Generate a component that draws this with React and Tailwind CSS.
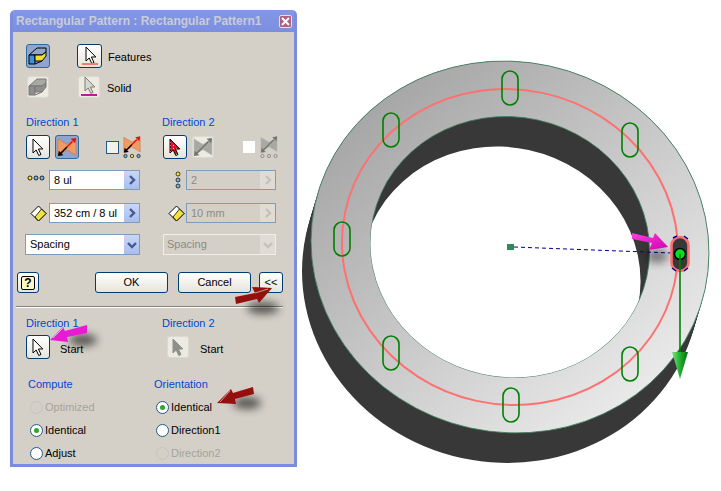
import React from 'react'

const font = { fontFamily: '"Liberation Sans", Tahoma, sans-serif' }

function Cursor({ x = 0, y = 0, fill = '#fff', stroke = '#000' }) {
  return (
    <path
      d="M0 0V14L3.2 11L5.8 16.5L8 15.5L5.4 10H9.8Z"
      transform={`translate(${x} ${y})`}
      fill={fill}
      stroke={stroke}
      strokeWidth="1"
    />
  )
}

function Btn({ w = 24, h = 24, active, off, children, className = '' }) {
  let look = 'border-[#003c74] bg-linear-to-b from-white to-[#e6e4da]'
  if (active) look = 'border-[#2f6a9c] bg-[#8ea6cd]'
  if (off) look = 'border-[#dcd9cf] bg-[#ecebe2]'
  return (
    <div
      className={`flex items-center justify-center shrink-0 rounded-[3px] border ${look} ${className}`}
      style={{ width: w, height: h }}
    >
      {children}
    </div>
  )
}

function ArrowBtn({ off, down }) {
  const c = off ? '#c4c2b8' : '#45598f'
  return (
    <div className={`flex items-center justify-center w-[15px] self-stretch ${off ? 'bg-[#dedcd4]' : 'bg-linear-to-b from-[#c9d6f5] to-[#a9bdf0]'}`}>
      <svg width="10" height="10" viewBox="0 0 10 10">
        <path d={down ? 'M1 3L5 7L9 3' : 'M3 1L7 5L3 9'} fill="none" stroke={c} strokeWidth="2.4" />
      </svg>
    </div>
  )
}

function Field({ value, w, off, down }) {
  return (
    <div
      className={`flex items-center h-full border pl-[4px] text-[11px] ${off ? 'border-[#7f9db9] text-[#8b8b85]' : 'border-[#7f9db9] bg-white text-black'}`}
      style={{ width: w }}
    >
      <span className="flex-1 whitespace-nowrap">{value}</span>
      <ArrowBtn off={off} down={down} />
    </div>
  )
}

function Bowtie({ off }) {
  const fill = off ? '#a9a9a3' : '#f09a64'
  const line = off ? '#74746f' : '#000'
  const tip = off ? '#74746f' : '#e01010'
  return (
    <g>
      <path d="M1 2L11 8L21 2V20L11 14L1 20Z" fill={fill} stroke={off ? '#c8c8c2' : '#c8703c'} strokeWidth=".6" />
      <path d="M4 18L11 11" stroke={line} strokeWidth="1.6" />
      <path d="M1 21L7 20L2 15Z" fill={line} />
      <path d="M11 11L17 5" stroke={tip} strokeWidth="1.6" />
      <path d="M21 1L15 2L20 7Z" fill={tip} />
    </g>
  )
}

function Block({ off }) {
  const stroke = off ? '#77777a' : '#000'
  return (
    <svg width="20" height="20" viewBox="0 0 20 20">
      <path d="M1 9L9 2H18L18 6L14 9H1Z" fill={off ? '#a8a8a4' : '#8fa6c8'} stroke={stroke} />
      <path d="M1 9H7V18H1Z" fill={off ? '#8f8f8b' : '#3f8fe0'} stroke={stroke} />
      <path d="M7 9H14L18 6V10L14 15H7Z" fill={off ? '#8f8f8b' : '#f4dc30'} stroke={stroke} />
      <path d="M7 18L14 15" stroke={stroke} />
    </svg>
  )
}

function Diamond({ className = '' }) {
  return (
    <svg width="17" height="17" viewBox="0 0 17 17" className={className}>
      <path d="M8.5 1L16 8.5L8.5 16L1 8.5Z" fill="#fff" stroke="#000" />
      <path d="M11.5 4L16 8.5L8.5 16L5 12Z" fill="#f4e23c" stroke="#000" strokeWidth=".8" />
    </svg>
  )
}

function Radio({ label, checked, off }) {
  return (
    <div className="flex items-center h-[23px] gap-[2px]">
      <div className={`flex items-center justify-center w-[13px] h-[13px] rounded-full border ${off ? 'border-[#c6c3ba]' : 'border-[#1f5a8c] bg-white'}`}>
        {checked && <div className="w-[5px] h-[5px] rounded-full bg-[#2fa52f]" />}
      </div>
      <span className={`text-[11px] ${off ? 'text-[#a5a39c]' : 'text-black'}`}>{label}</span>
    </div>
  )
}

function Label({ children }) {
  return <div className="h-[14px] leading-[14px] text-[11px] text-[#0046d5]">{children}</div>
}

function Dialog() {
  return (
    <div
      className="w-[287px] h-[457px] ml-[10px] mt-[10px] shrink-0 flex flex-col overflow-hidden rounded-t-[5px] border-[3px] border-t-0 border-[#7b8be0] bg-[#d4d0c8]"
      style={font}
    >
      <div className="flex items-center justify-between shrink-0 h-[22px] -mx-[3px] pl-[6px] pr-[5px] bg-linear-to-b from-[#8497e6] to-[#7b8ee0]">
        <span className="text-[12px] font-bold text-[#c9ccd6] whitespace-nowrap">Rectangular Pattern : Rectangular Pattern1</span>
        <div className="flex items-center justify-center w-[13px] h-[13px] rounded-[2px] border border-[#e6dcea] bg-[#b25f7c]">
          <svg width="9" height="9" viewBox="0 0 9 9">
            <path d="M1 1L8 8M8 1L1 8" stroke="#fff" strokeWidth="2" />
          </svg>
        </div>
      </div>

      <div className="flex items-center h-6 mt-3 ml-[13px] text-[11px]">
        <Btn active><Block /></Btn>
        <Btn w={25} className="ml-[27px]">
          <svg width="20" height="21" viewBox="0 0 20 21">
            <Cursor x={6} y={1} />
            <path d="M2 18H18" stroke="#f47a7a" strokeWidth="2" />
          </svg>
        </Btn>
        <span className="ml-[6px] mt-[3px]">Features</span>
      </div>

      <div className="flex items-center h-[22px] mt-2 ml-[14px] text-[11px]">
        <Btn w={22} h={22} off><Block off /></Btn>
        <Btn w={22} h={22} off className="ml-[29px]">
          <svg width="18" height="20" viewBox="0 0 18 20">
            <Cursor x={5} y={0} fill="#d8d8d2" stroke="#7d7d78" />
            <path d="M1 18H17" stroke="#c8149a" strokeWidth="2" />
          </svg>
        </Btn>
        <span className="ml-[7px] mt-[3px]">Solid</span>
      </div>

      <div className="grid grid-cols-[137px_1fr] mt-[17px] ml-3">
        <div className="flex flex-col text-[11px]">
          <div className="ml-px"><Label>Direction 1</Label></div>
          <div className="flex items-center h-6 mt-[6px] ml-px">
            <Btn>
              <svg width="14" height="18" viewBox="0 0 14 18"><Cursor x={2} y={1} /></svg>
            </Btn>
            <Btn active className="ml-[5px]">
              <svg width="20" height="20" viewBox="0 0 22 22"><Bowtie /></svg>
            </Btn>
            <div className="w-[13px] h-[13px] ml-[27px] border border-[#1f5a8c] bg-[#f2f1ea]" />
            <svg width="18" height="24" viewBox="0 0 22 28" className="ml-[4px]">
              <Bowtie />
              <circle cx="3" cy="25" r="2" fill="#7fb3d8" stroke="#000" strokeWidth=".8" />
              <circle cx="11" cy="25" r="2" fill="#f4e23c" stroke="#000" strokeWidth=".8" />
              <circle cx="19" cy="25" r="2" fill="#7fb3d8" stroke="#000" strokeWidth=".8" />
            </svg>
          </div>
          <div className="flex items-center h-5 mt-[11px]">
            <div className="w-[24px] pl-[2px]">
              <svg width="18" height="6" viewBox="0 0 18 6" className="block -mt-[5px]">
                <circle cx="3" cy="3" r="2" fill="#f4e23c" stroke="#000" strokeWidth=".8" />
                <circle cx="9" cy="3" r="2" fill="#7fb3d8" stroke="#000" strokeWidth=".8" />
                <circle cx="15" cy="3" r="2" fill="#7fb3d8" stroke="#000" strokeWidth=".8" />
              </svg>
            </div>
            <Field value="8 ul" w={91} />
          </div>
          <div className="flex items-center h-5 mt-[13px]">
            <div className="w-[24px] flex justify-end pr-[2px]"><Diamond /></div>
            <Field value="352 cm / 8 ul" w={91} />
          </div>
          <div className="h-[21px] mt-[11px]">
            <Field value="Spacing" w={115} down />
          </div>
        </div>

        <div className="flex flex-col text-[11px]">
          <Label>Direction 2</Label>
          <div className="flex items-center h-6 mt-[6px] ml-px">
            <Btn>
              <svg width="14" height="18" viewBox="0 0 14 18">
                <defs>
                  <pattern id="check" width="3" height="3" patternUnits="userSpaceOnUse">
                    <rect width="3" height="3" fill="#e8102a" />
                    <rect width="1" height="1" fill="#fff" />
                  </pattern>
                </defs>
                <Cursor x={2} y={1} fill="url(#check)" />
              </svg>
            </Btn>
            <Btn w={22} h={22} off className="ml-[5px]">
              <svg width="20" height="20" viewBox="0 0 22 22"><Bowtie off /></svg>
            </Btn>
            <div className="w-[12px] h-[12px] ml-[29px] bg-white" />
            <svg width="18" height="24" viewBox="0 0 22 28" className="ml-[5px]">
              <Bowtie off />
              <circle cx="3" cy="25" r="2" fill="none" stroke="#7d7d78" strokeWidth=".9" />
              <circle cx="11" cy="25" r="2" fill="none" stroke="#7d7d78" strokeWidth=".9" />
              <circle cx="19" cy="25" r="2" fill="none" stroke="#7d7d78" strokeWidth=".9" />
            </svg>
          </div>
          <div className="flex items-center h-5 mt-[11px]">
            <svg width="24" height="20" viewBox="0 0 24 20" className="shrink-0">
              <circle cx="16" cy="4" r="2" fill="#f4e23c" stroke="#000" strokeWidth=".7" />
              <circle cx="16" cy="10" r="2" fill="#7fb3d8" stroke="#000" strokeWidth=".7" />
              <circle cx="16" cy="16" r="2" fill="#7fb3d8" stroke="#000" strokeWidth=".7" />
            </svg>
            <Field value="2" w={90} off />
          </div>
          <div className="flex items-center h-5 mt-[13px]">
            <div className="w-[24px] flex justify-end pr-[1px]"><Diamond /></div>
            <Field value="10 mm" w={90} off />
          </div>
          <div className="h-[21px] mt-[11px] ml-px">
            <div className="flex items-center h-full w-[113px] border border-[#f0eee6] pl-[3px] text-[11px] text-[#8b8b85] bg-[#d4d0c8]">
              <span className="flex-1">Spacing</span>
              <ArrowBtn off down />
            </div>
          </div>
        </div>
      </div>

      <div className="flex items-center shrink-0 h-[21px] mt-[17px] ml-[4px] text-[11px]">
        <Btn w={22} h={21}>
          <div className="flex items-center justify-center w-[14px] h-[14px] rounded-[2px] border border-black bg-[#fbf8c8] text-[12px] font-bold leading-none text-black">?</div>
        </Btn>
        <Btn w={73} h={21} className="ml-[56px]">OK</Btn>
        <Btn w={73} h={21} className="ml-[10px]">Cancel</Btn>
        <Btn w={24} h={21} className="ml-[8px]">&lt;&lt;</Btn>
      </div>

      <div className="shrink-0 h-[2px] mt-[13px] ml-[3px] w-[267px] border-t border-b border-t-[#85837e] border-b-white" />

      <div className="grid grid-cols-[136px_1fr] mt-[8px] ml-[13px]">
        <div>
          <Label>Direction 1</Label>
          <div className="flex items-center h-6 mt-[5px] text-[11px]">
            <Btn>
              <svg width="14" height="18" viewBox="0 0 14 18"><Cursor x={2} y={1} /></svg>
            </Btn>
            <span className="ml-[10px] mt-[4px]">Start</span>
          </div>
        </div>
        <div>
          <Label>Direction 2</Label>
          <div className="flex items-center h-6 mt-[5px] ml-[5px] text-[11px]">
            <Btn w={22} h={22} off>
              <svg width="14" height="18" viewBox="0 0 14 18">
                <Cursor x={2} y={1} fill="#8f8f8b" stroke="#8f8f8b" />
              </svg>
            </Btn>
            <span className="ml-[11px] mt-[4px]">Start</span>
          </div>
        </div>
      </div>

      <div className="grid grid-cols-[126px_1fr] mt-[18px] ml-[15px]">
        <div>
          <Label>Compute</Label>
          <div className="mt-[5px] ml-[2px]">
            <Radio label="Optimized" off />
            <Radio label="Identical" checked />
            <Radio label="Adjust" />
          </div>
        </div>
        <div>
          <Label>Orientation</Label>
          <div className="mt-[5px] ml-[2px]">
            <Radio label="Identical" checked />
            <Radio label="Direction1" />
            <Radio label="Direction2" off />
          </div>
        </div>
      </div>
    </div>
  )
}

const slots = [
  [510, 88], [391, 130], [630, 140], [342, 239], [391, 353], [630, 364], [511, 405],
]

function Model() {
  const tilt = 'rotate(12.3 510 247)'
  return (
    <svg width="424" height="491" viewBox="297 0 424 491" className="shrink-0">
      <defs>
        <linearGradient id="face" gradientUnits="userSpaceOnUse" x1="340" y1="120" x2="690" y2="390">
          <stop offset="0" stopColor="#a4a4a4" />
          <stop offset="1" stopColor="#efefef" />
        </linearGradient>
        <linearGradient id="cone" x1="0" y1="0" x2="1" y2="0">
          <stop offset="0" stopColor="#7fe07f" />
          <stop offset=".5" stopColor="#20b030" />
          <stop offset="1" stopColor="#0a6a14" />
        </linearGradient>
        <linearGradient id="pink" x1="0" y1="0" x2="1" y2="1">
          <stop offset="0" stopColor="#ff40e0" />
          <stop offset="1" stopColor="#d000b0" />
        </linearGradient>
        <clipPath id="hole">
          <ellipse cx="510" cy="247" rx="140" ry="130" transform={tilt} />
        </clipPath>
        <filter id="soft" x="-50%" y="-50%" width="200%" height="200%">
          <feGaussianBlur stdDeviation="4" />
        </filter>
      </defs>

      {[0, .125, .25, .375, .5, .625, .75, .875, 1].map((t) => (
        <g key={t} transform={`translate(${-9 * t} ${30 * t})`}>
          <ellipse cx="510" cy="247" rx="199.6" ry="185.3" transform={tilt} fill="#383838" />
        </g>
      ))}
      <ellipse cx="510" cy="247" rx="199.6" ry="185.3" transform={tilt} fill="url(#face)" stroke="#3e7f5e" strokeWidth=".8" />
      <ellipse cx="510" cy="247" rx="140" ry="130" transform={tilt} fill="#383838" stroke="#3e7f5e" strokeWidth=".8" />
      <g clipPath="url(#hole)">
        <g transform="translate(-9 30)">
          <ellipse cx="510" cy="247" rx="140" ry="130" transform={tilt} fill="#fff" />
        </g>
      </g>

      <ellipse cx="510" cy="247" rx="168.5" ry="157.5" transform={tilt} fill="none" stroke="#ff7070" strokeWidth="2" />

      {slots.map(([x, y]) => (
        <rect key={x + '-' + y} x={x - 8} y={y - 17} width="16" height="34" rx="8" fill="none" stroke="#008000" strokeWidth="1.6" />
      ))}

      <rect x="507" y="244" width="7" height="6" fill="#2e8b57" />
      <path d="M514 247L672 253" stroke="#000090" strokeWidth="1" strokeDasharray="4 3" fill="none" />

      <ellipse cx="657" cy="256" rx="11" ry="7" fill="#000" opacity=".45" filter="url(#soft)" />
      <path d="M632 233L653 238L655 233L668 247L649 250L652 243L632 239Z" fill="url(#pink)" />

      <rect x="671.5" y="237" width="17" height="34" rx="8.5" fill="#383838" stroke="#ff7070" strokeWidth="2.6" />
      <path d="M673 238L677 236M684 236L688 239M672 268L676 271M684 271L688 268" stroke="#000090" strokeWidth="1.4" />
      <circle cx="680" cy="254" r="5.5" fill="#00e020" stroke="#000" strokeWidth="1.6" />
      <path d="M680 254V352" stroke="#008000" strokeWidth="1.6" />
      <path d="M672 352H688L680 379Z" fill="url(#cone)" />
    </svg>
  )
}

function Arrow({ points, shadow, color, shine }) {
  return (
    <g>
      <ellipse cx={shadow[0]} cy={shadow[1]} rx={shadow[2]} ry="6" fill="#000" opacity=".6" filter="url(#dropBlur)" />
      <polygon points={points} fill={color} />
      <path d={shine} stroke="#fff" strokeOpacity=".7" strokeWidth=".8" fill="none" />
    </g>
  )
}

export default function App() {
  return (
    <div className="relative flex w-[721px] h-[491px] overflow-hidden bg-white">
      <Dialog />
      <Model />
      {/* callout arrows drawn over the dialog */}
      <svg width="721" height="491" className="absolute inset-0 pointer-events-none">
        <defs>
          <filter id="dropBlur" x="-50%" y="-100%" width="200%" height="300%">
            <feGaussianBlur stdDeviation="4" />
          </filter>
        </defs>
        <Arrow points="272,288 252,287 255,293 235,297 236,304 257,299 259,303" shadow={[263, 308, 16]} color="#960f0f" shine="M255 293L268 289" />
        <Arrow points="50,340 63,327 65,331 87,325 87,333 67,337 68,342" shadow={[83, 340, 14]} color="#e81ad2" shine="M53 338L63 328" />
        <Arrow points="217,403 231,389 233,393 253,387 254,394 235,399 236,404" shadow={[247, 403, 14]} color="#960f0f" shine="M220 402L230 391" />
      </svg>
    </div>
  )
}
